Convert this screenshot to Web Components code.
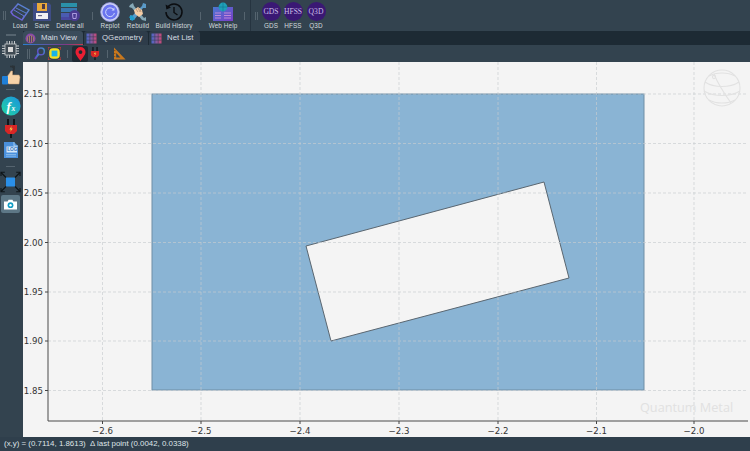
<!DOCTYPE html>
<html>
<head>
<meta charset="utf-8">
<title>Quantum Metal</title>
<style>
  html, body { margin: 0; padding: 0; width: 750px; height: 451px; overflow: hidden; background: #2f3f4c; }
</style>
</head>
<body>
<metal-app></metal-app>
<script>
const ICONS = {
  load: `<svg width="22" height="20" viewBox="0 0 22 20"><defs><linearGradient id="l" x1="0" y1="1" x2="1" y2="0"><stop offset="0" stop-color="#7a52d8"/><stop offset="1" stop-color="#4f8fd0"/></linearGradient></defs><path d="M2 10 9 2 20 8 13 18 4 13Z" fill="none" stroke="url(#l)" stroke-width="1.4"/><path d="M2 10 4 13 M5 8 15 14 13 18 M7 6 17 11" fill="none" stroke="url(#l)" stroke-width="1"/></svg>`,
  save: `<svg width="20" height="20" viewBox="0 0 20 20"><path d="M1 1H17L19 3V19H1Z" fill="#3f4d86"/><rect x="5" y="1" width="10" height="8" fill="#e9a93a"/><rect x="10" y="2" width="3" height="5" fill="#4a3a4a"/><rect x="4" y="11" width="12" height="6" fill="#f2f2f2"/><rect x="6" y="13" width="4" height="1.2" fill="#6a6a8a"/></svg>`,
  del: `<svg width="22" height="20" viewBox="0 0 22 20"><path d="M2 1H18V5H2Z" fill="#2a90a8"/><path d="M2 6H18V10H2Z" fill="#3a78b0"/><path d="M2 11H14V15H2Z" fill="#4a5cb0"/><path d="M2 15H12V18H2Z" fill="#4848a0"/><circle cx="15.5" cy="13.5" r="5.5" fill="#4a3a90"/><path d="M13.5 11.5H17.5L17 16.5H14Z" fill="none" stroke="#b7a8e8" stroke-width=".9"/></svg>`,
  replot: `<svg width="20" height="20" viewBox="0 0 20 20"><circle cx="10" cy="10" r="9.4" fill="#cfd3f4" stroke="#8d8fd8" stroke-width=".8"/><circle cx="10" cy="10" r="7.6" fill="#6a74ee"/><path d="M13.5 7.5A4.4 4.4 0 1 0 14.4 11" fill="none" stroke="#cfd8ff" stroke-width="1"/><path d="M14.4 5.4V8.4H11.6Z" fill="#cfd8ff"/></svg>`,
  rebuild: `<svg width="20" height="20" viewBox="0 0 20 20"><path d="M2 3 5 1 6 4 16 16 18 15 18 19 14 18 4 6 1 5Z" fill="#86a9b8"/><path d="M18 2 15 1 14 4 4 14 2 13 2 18 6 18 15 6 18 6Z" fill="#5a9ac8"/><path d="M6 8 10 5 14 8 15 12 11 15 7 12Z" fill="#f5cda6"/><path d="M8 7 10 10M10 6 12 10M12 7 13 10" stroke="#9a7a60" stroke-width=".6"/><path d="M1 15 4 13 7 17 4 19Z" fill="#1f9fcf"/></svg>`,
  history: `<svg width="20" height="20" viewBox="0 0 20 20"><path d="M3.6 5.2A8 8 0 1 1 2 10" fill="none" stroke="#0b0d10" stroke-width="1.5"/><path d="M1.6 2.4 2.4 7.4 7 5.6Z" fill="#0b0d10"/><path d="M10 5V10.5L13.5 13" fill="none" stroke="#0b0d10" stroke-width="1.4"/></svg>`,
  web: `<svg width="22" height="20" viewBox="0 0 22 20"><defs><linearGradient id="w" x1="0" y1="0" x2="1" y2="1"><stop offset="0" stop-color="#4a78d0"/><stop offset="1" stop-color="#7a3ec8"/></linearGradient></defs><rect x="1" y="5" width="20" height="14" fill="url(#w)"/><circle cx="11" cy="5" r="4.4" fill="#1fa0b8"/><path d="M6.6 5H15.4M11 .6V9.4" stroke="#0e6f8a" stroke-width=".5"/><path d="M3 11H9M3 13.5H9M3 16H9M12 11H19M12 13.5H19M12 16H19" stroke="#c88fd8" stroke-width=".9"/></svg>`,
  chip: `<svg width="19" height="19" viewBox="0 0 19 19"><rect x="4" y="4" width="11" height="11" fill="#3f4a53" stroke="#c4c8cb" stroke-width=".8"/><rect x="7" y="7" width="5" height="5" fill="#d8d8d8"/><path d="M6 1V4M8.5 1V4M11 1V4M13.5 1V4M6 15V18M8.5 15V18M11 15V18M13.5 15V18M1 6H4M1 8.5H4M1 11H4M1 13.5H4M15 6H18M15 8.5H18M15 11H18M15 13.5H18" stroke="#c4c8cb" stroke-width="1"/></svg>`,
  thumb: `<svg width="20" height="21" viewBox="0 0 20 21"><path d="M11 1 13 3 12 9" fill="none" stroke="#2b3238" stroke-width="2"/><path d="M9 1.5H14" stroke="#2b3238" stroke-width="1.6"/><path d="M6 12 10 6 11.5 6 11.5 10H18L19 12 18 19H8L6 18Z" fill="#f6d2a8" stroke="#c79c74" stroke-width=".5"/><rect x="1" y="11" width="6" height="8.5" rx="1" fill="#1f7fd8"/></svg>`,
  fx: `<svg width="20" height="20" viewBox="0 0 20 20"><defs><linearGradient id="f" x1="0" y1="1" x2="1" y2="0"><stop offset="0" stop-color="#22d8a0"/><stop offset="1" stop-color="#1a90e0"/></linearGradient></defs><circle cx="10" cy="10" r="9.6" fill="url(#f)"/><text x="5.6" y="14.6" font-family="Liberation Serif, serif" font-style="italic" font-weight="700" font-size="13" fill="#fff">f</text><text x="10.6" y="14.6" font-family="Liberation Serif, serif" font-style="italic" font-weight="700" font-size="7.5" fill="#fff">x</text></svg>`,
  plug: `<svg width="14" height="19" viewBox="0 0 14 19"><path d="M4 0V6M10 0V6" stroke="#11161a" stroke-width="2"/><path d="M1 6H13V12L10 15H4L1 12Z" fill="#d82626"/><path d="M7.6 7 5.4 10.4H7L6.2 13 8.8 9.4H7.2Z" fill="#f3d34a"/><path d="M7 15V19" stroke="#11161a" stroke-width="2"/></svg>`,
  log: `<svg width="16" height="18" viewBox="0 0 16 18"><path d="M1 1H11L15 5V17H1Z" fill="#4a90dc"/><path d="M11 1V5H15" fill="none" stroke="#bcdcf4" stroke-width=".8"/><rect x="3.5" y="5.5" width="10.5" height="6" fill="#d6e8f8"/><text x="4.2" y="10.4" font-family="Liberation Sans, sans-serif" font-size="4.8" font-weight="700" fill="#3a78c0">LOG</text><path d="M3 13.5H13M3 15.2H13" stroke="#a9d0f0" stroke-width=".6"/></svg>`,
  expand: `<svg width="21" height="22" viewBox="0 0 21 22"><rect x="6" y="6.5" width="9" height="9" fill="#2a8fe8"/><path d="M6 6.5 1 1.5M15 6.5 20 1.5M6 15.5 1 20.5M15 15.5 20 20.5" stroke="#0e1418" stroke-width="1.1"/><path d="M1 5V1.2H4.8M20 5V1.2H16.2M1 17V20.8H4.8M20 17V20.8H16.2" fill="none" stroke="#0e1418" stroke-width="1.1"/></svg>`,
  camera: `<svg width="15" height="11" viewBox="0 0 15 11"><path d="M1 2.4H4.6L5.6 .8H9.4L10.4 2.4H14V10.4H1Z" fill="#fff"/><circle cx="7.5" cy="6.2" r="2.9" fill="#129cc4"/><circle cx="7.5" cy="6.2" r="1.2" fill="#fff"/></svg>`,
  zoom: `<svg width="11" height="14" viewBox="0 0 11 14"><defs><linearGradient id="z" x1="0" y1="1" x2="1" y2="0"><stop offset="0" stop-color="#6a3cc8"/><stop offset="1" stop-color="#3f90c8"/></linearGradient></defs><circle cx="7" cy="4.4" r="3.3" fill="none" stroke="url(#z)" stroke-width="1.5"/><path d="M4.6 6.8 1 12" stroke="url(#z)" stroke-width="2.1"/></svg>`,
  target: `<svg width="13" height="13" viewBox="0 0 13 13"><path d="M0 3V0H3M10 0H13V3M13 10V13H10M3 13H0V10" fill="none" stroke="#d83a3a" stroke-width="1"/><rect x="1.2" y="1.2" width="10.6" height="10.6" rx="4" fill="#f6e020"/><rect x="3.6" y="3.6" width="5.8" height="5.8" fill="#18b4e8"/></svg>`,
  pin: `<svg width="11" height="14" viewBox="0 0 11 14"><path fill-rule="evenodd" d="M5.5 0A5 5 0 0 1 10.5 5C10.5 8.2 7 11.6 5.5 14 4 11.6 .5 8.2 .5 5A5 5 0 0 1 5.5 0ZM5.5 3.2A1.9 1.9 0 1 0 5.5 7 1.9 1.9 0 0 0 5.5 3.2Z" fill="#ea1f33"/></svg>`,
  ruler: `<svg width="13" height="13" viewBox="0 0 13 13"><path fill-rule="evenodd" d="M1 .5 12.6 12.5H1ZM3.2 6V10.4H7.4Z" fill="#c8781e"/><path d="M1 3.5H2.4M1 6.5H2.4M1 9.5H2.4" stroke="#5a3208" stroke-width=".5"/></svg>`,
  tabmain: `<svg width="11" height="11" viewBox="0 0 11 11"><circle cx="5.5" cy="5.5" r="5" fill="#8a4aa8"/><circle cx="5.5" cy="6" r="3.4" fill="#a88a60"/><path d="M3.6 3.4V9M5.5 3V9.4M7.4 3.4V9" stroke="#4a2a78" stroke-width=".9"/></svg>`,
  tabgrid: `<svg width="11" height="11" viewBox="0 0 11 11"><defs><linearGradient id="g" x1="0" y1="0" x2="1" y2="0"><stop offset="0" stop-color="#4a68c8"/><stop offset="1" stop-color="#c84a78"/></linearGradient></defs><rect x=".5" y=".5" width="10" height="10" fill="url(#g)"/><path d="M.5 3.8H10.5M.5 7.2H10.5M3.8 .5V10.5M7.2 .5V10.5" stroke="#2d3b4a" stroke-width=".5"/></svg>`
};

class MetalTool extends HTMLElement {
  connectedCallback() {
    const w = this.getAttribute('w') || 22;
    const round = this.getAttribute('round');
    const icon = round
      ? `<div class="round">${round}</div>`
      : ICONS[this.getAttribute('icon')];
    this.attachShadow({ mode: 'open' });
    this.shadowRoot.innerHTML = `
    <style>
      :host { display: flex; flex-direction: column; align-items: center; width: ${w}px; flex: none; color: #d4dade; }
      .ico { height: 21px; margin-top: 1px; display: flex; align-items: center; justify-content: center; }
      .label { font: 6.4px/7px "Liberation Sans", sans-serif; margin-top: 0; white-space: nowrap; letter-spacing: .1px; }
      .round { width: 19px; height: 19px; border-radius: 50%; background: #3a1874; color: #c9bce6; font: 7.6px/19px "Liberation Serif", serif; text-align: center; }
    </style>
    <div class="ico">${icon}</div>
    <div class="label"><slot></slot></div>
    `;
  }
}
customElements.define('metal-tool', MetalTool);

class MetalSep extends HTMLElement {
  connectedCallback() {
    const w = this.getAttribute('w') || 10;
    const grip = this.hasAttribute('grip');
    this.attachShadow({ mode: 'open' });
    this.shadowRoot.innerHTML = `
    <style>
      :host { display: flex; align-items: center; justify-content: center; gap: 1px; width: ${w}px; flex: none; height: 100%; }
      i { display: block; width: 1px; height: ${this.getAttribute('h') || 8}px; background: #55646f; }
    </style>
    <i></i>${grip ? '<i></i>' : ''}
    `;
  }
}
customElements.define('metal-sep', MetalSep);

class MetalToolbar extends HTMLElement {
  connectedCallback() {
    this.attachShadow({ mode: 'open' });
    this.shadowRoot.innerHTML = `
    <style>
      :host { display: flex; align-items: stretch; height: 31px; background: #33434f; flex: none; }
      .divider { width: 1px; background: #263440; flex: none; margin: 0 1px; }
    </style>
    <metal-sep w="9" h="9" grip></metal-sep>
    <metal-tool w="22" icon="load">Load</metal-tool>
    <metal-tool w="22" icon="save">Save</metal-tool>
    <metal-tool w="34" icon="del">Delete all</metal-tool>
    <metal-sep w="10" h="8"></metal-sep>
    <metal-tool w="26" icon="replot">Replot</metal-tool>
    <metal-tool w="30" icon="rebuild">Rebuild</metal-tool>
    <metal-tool w="42" icon="history">Build History</metal-tool>
    <metal-sep w="11" h="8"></metal-sep>
    <metal-tool w="34" icon="web">Web Help</metal-tool>
    <metal-sep w="9" h="8"></metal-sep>
    <div class="divider"></div>
    <metal-sep w="8" h="8" grip></metal-sep>
    <metal-tool w="22" round="GDS">GDS</metal-tool>
    <metal-tool w="22" round="HFSS">HFSS</metal-tool>
    <metal-tool w="24" round="Q3D">Q3D</metal-tool>
    `;
  }
}
customElements.define('metal-toolbar', MetalToolbar);

class MetalTab extends HTMLElement {
  connectedCallback() {
    const active = this.hasAttribute('active');
    this.attachShadow({ mode: 'open' });
    this.shadowRoot.innerHTML = `
    <style>
      :host { display: flex; align-items: center; gap: 5px; box-sizing: border-box; width: ${this.getAttribute('w')}px; height: 14px; padding-left: ${this.getAttribute('pad') || 2}px; flex: none; position: relative;
        background: ${active ? '#3b4c5b' : '#2e3c4a'}; border-radius: 3px 3px 0 0; color: #d8dde1;
        font: 7.8px/14px "Liberation Sans", sans-serif; }
      .line { position: absolute; left: 0; right: 0; bottom: 0; height: 1.5px; background: linear-gradient(90deg, #2a7fd0, #7a3a8a 70%, #c83a4a); }
      svg { flex: none; }
    </style>
    ${ICONS[this.getAttribute('icon')]}
    <span><slot></slot></span>
    ${active ? '<div class="line"></div>' : ''}
    `;
  }
}
customElements.define('metal-tab', MetalTab);

class MetalTabs extends HTMLElement {
  connectedCallback() {
    this.attachShadow({ mode: 'open' });
    this.shadowRoot.innerHTML = `
    <style>
      :host { display: flex; height: 14px; background: #1d2a34; flex: none; gap: 1px; }
    </style>
    <metal-tab w="60" icon="tabmain" pad="2" active>Main View</metal-tab>
    <metal-tab w="64" icon="tabgrid" pad="2">QGeometry</metal-tab>
    <metal-tab w="51" icon="tabgrid" pad="2">Net List</metal-tab>
    `;
  }
}
customElements.define('metal-tabs', MetalTabs);

class MetalSubbar extends HTMLElement {
  connectedCallback() {
    this.attachShadow({ mode: 'open' });
    this.shadowRoot.innerHTML = `
    <style>
      :host { display: flex; align-items: center; height: 17px; background: #33434f; flex: none; }
      .b { display: flex; align-items: center; justify-content: center; flex: none; height: 16px; }
      .on { background: #1f2a33; border-radius: 2px; }
    </style>
    <metal-sep w="10" h="10" grip></metal-sep>
    <div class="b" style="width:13px">${ICONS.zoom}</div>
    <div class="b" style="width:16px">${ICONS.target}</div>
    <metal-sep w="10" h="8"></metal-sep>
    <div class="b on" style="width:16px">${ICONS.pin}</div>
    <div class="b" style="width:14px">${ICONS.plug.replace('width="14" height="19"', 'width="10" height="13"')}</div>
    <metal-sep w="11" h="8"></metal-sep>
    <div class="b" style="width:13px">${ICONS.ruler}</div>
    `;
  }
}
customElements.define('metal-subbar', MetalSubbar);

class MetalSide extends HTMLElement {
  connectedCallback() {
    this.attachShadow({ mode: 'open' });
    this.shadowRoot.innerHTML = `
    <style>
      :host { display: flex; flex-direction: column; align-items: center; width: 23px; background: #33434f; flex: none; box-sizing: border-box; padding-right: 2px; }
      .grip { width: 10px; height: 2px; background: #55646f; margin: 3px 0 4px; flex: none; }
      .sep { width: 9px; height: 1px; background: #55646f; flex: none; }
      .b { display: flex; align-items: center; justify-content: center; flex: none; width: 21px; }
      .cam { width: 19px; height: 18px; background: #5d7786; border-radius: 2px; margin-top: 2px; }
    </style>
    <div class="grip"></div>
    <div class="b" style="height:19px">${ICONS.chip}</div>
    <div class="b" style="height:23px;margin-top:5px">${ICONS.thumb}</div>
    <div class="sep" style="margin-top:2px"></div>
    <div class="b" style="height:20px;margin-top:6px">${ICONS.fx}</div>
    <div class="b" style="height:20px;margin-top:2px">${ICONS.plug}</div>
    <div class="b" style="height:18px;margin-top:3px">${ICONS.log}</div>
    <div class="sep" style="margin-top:7px"></div>
    <div class="b" style="height:22px;margin-top:4px">${ICONS.expand}</div>
    <div class="b cam">${ICONS.camera}</div>
    `;
  }
}
customElements.define('metal-side', MetalSide);

class MetalPlot extends HTMLElement {
  connectedCallback() {
    // svg origin is at page (23,62); everything in here sits on the mpl canvas
    const ox = 23, oy = 62;
    const xt = [[102.5,'−2.6'],[201,'−2.5'],[300,'−2.4'],[399,'−2.3'],[498,'−2.2'],[596.5,'−2.1'],[694,'−2.0']];
    const yt = [[94,'2.15'],[143.5,'2.10'],[193,'2.05'],[242.5,'2.00'],[292,'1.95'],[341,'1.90'],[390.5,'1.85']];
    const L = 48 - ox, R = 748 - ox, T = 62 - oy, B = 421 - oy;
    let grid = '', ticks = '';
    xt.forEach(([x, s]) => {
      const px = x - ox;
      grid += `<path d="M${px} ${T}V${B}"/>`;
      ticks += `<path d="M${px} ${B}v3" stroke="#444"/><text x="${px}" y="${B + 13}" text-anchor="middle">${s}</text>`;
    });
    yt.forEach(([y, s]) => {
      const py = y - oy;
      grid += `<path d="M${L} ${py}H${R}"/>`;
      ticks += `<path d="M${L - 3} ${py}h3" stroke="#444"/><text x="${L - 5}" y="${py + 3}" text-anchor="end">${s}</text>`;
    });
    const pts = [[306,246],[544,182],[569,278],[331,341]].map(p => (p[0] - ox) + ',' + (p[1] - oy)).join(' ');
    this.attachShadow({ mode: 'open' });
    this.shadowRoot.innerHTML = `
    <style>
      :host { display: block; flex: 1; background: #f4f4f4; min-height: 0; min-width: 0; }
      svg { display: block; }
      text { font: 8.6px "DejaVu Sans", sans-serif; fill: #333; }
      .wm { font: 12.7px "Open Sans", sans-serif; fill: #e1e1e1; }
    </style>
    <svg width="727" height="375" viewBox="0 0 727 375">
      <rect x="${152 - ox}" y="${94 - oy}" width="492" height="296" fill="#8ab4d4" stroke="#6f8ea5" stroke-width="1"/>
      <polygon points="${pts}" fill="#f4f4f4" stroke="#5a6670" stroke-width="1"/>
      <g fill="none" stroke="#c8ccd0" stroke-opacity=".65" stroke-width="1" stroke-dasharray="3 2">${grid}</g>
      <g fill="none" stroke="#e2e2e2" stroke-width="1.1" transform="translate(${722 - ox} ${88 - oy})">
        <circle r="18"/>
        <path d="M-17 -6C-8 0 8 0 17 -6M-18 3C-8 9 8 9 18 3M-13 12C-6 16 6 16 13 12M-13 -12C-6 -16 6 -16 13 -12"/>
        <path d="M-8 -14C-4 -4 4 8 9 15"/>
        <circle cx="-8" cy="-11" r="1.6"/>
      </g>
      <text class="wm" x="${640 - ox}" y="${412 - oy}">Quantum Metal</text>
      <path d="M${L} ${T}V${B}H${R}" fill="none" stroke="#4a4a4a" stroke-width="1"/>
      ${ticks}
    </svg>
    `;
  }
}
customElements.define('metal-plot', MetalPlot);

class MetalStatus extends HTMLElement {
  connectedCallback() {
    this.attachShadow({ mode: 'open' });
    this.shadowRoot.innerHTML = `
    <style>
      :host { display: block; box-sizing: border-box; height: 14px; background: #2f3f4c; color: #dfe4e8; flex: none; padding-left: 4px; font: 7.9px/14px "Liberation Sans", sans-serif; white-space: nowrap; }
    </style>
    <slot></slot>
    `;
  }
}
customElements.define('metal-status', MetalStatus);

class MetalApp extends HTMLElement {
  connectedCallback() {
    this.attachShadow({ mode: 'open' });
    this.shadowRoot.innerHTML = `
    <style>
      :host { display: flex; flex-direction: column; width: 750px; height: 451px; overflow: hidden; }
      .mid { display: flex; flex: 1; min-height: 0; }
      .col { display: flex; flex-direction: column; flex: 1; min-width: 0; }
    </style>
    <metal-toolbar></metal-toolbar>
    <div class="mid">
      <metal-side></metal-side>
      <div class="col">
        <metal-tabs></metal-tabs>
        <metal-subbar></metal-subbar>
        <metal-plot></metal-plot>
      </div>
    </div>
    <metal-status>(x,y) = (0.7114, 1.8613)&nbsp; Δ last point (0.0042, 0.0338)</metal-status>
    `;
  }
}
customElements.define('metal-app', MetalApp);
</script>
</body>
</html>
